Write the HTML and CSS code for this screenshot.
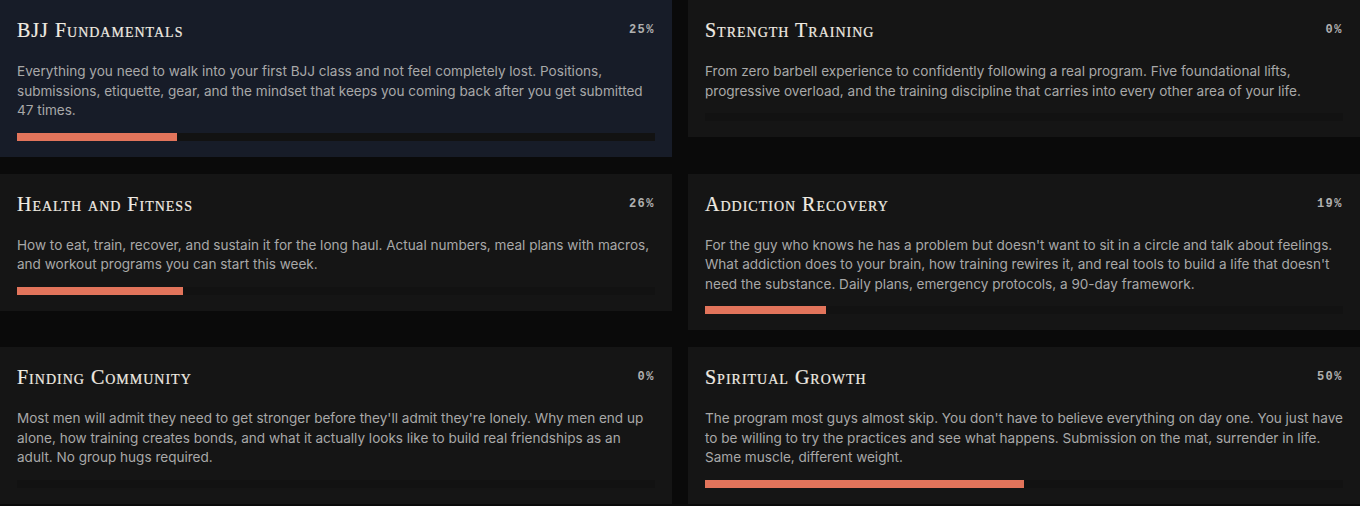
FILE: index.html
```html
<!DOCTYPE html>
<html lang="en">
<head>
<meta charset="utf-8">
<title>Programs</title>
<link rel="stylesheet" href="styles.css">
</head>
<body>
<main class="grid">
  <article class="card card-active">
    <div class="card-head"><h2 class="title">BJJ Fundamentals</h2><span class="pct">25%</span></div>
    <p class="desc">Everything you need to walk into your first BJJ class and not feel completely lost. Positions, submissions, etiquette, gear, and the mindset that keeps you coming back after you get submitted 47 times.</p>
    <div class="track"><div class="fill" style="width:25%"></div></div>
  </article>
  <article class="card">
    <div class="card-head"><h2 class="title">Strength Training</h2><span class="pct">0%</span></div>
    <p class="desc">From zero barbell experience to confidently following a real program. Five foundational lifts, progressive overload, and the training discipline that carries into every other area of your life.</p>
    <div class="track"><div class="fill" style="width:0%"></div></div>
  </article>
  <article class="card">
    <div class="card-head"><h2 class="title">Health and Fitness</h2><span class="pct">26%</span></div>
    <p class="desc">How to eat, train, recover, and sustain it for the long haul. Actual numbers, meal plans with macros, and workout programs you can start this week.</p>
    <div class="track"><div class="fill" style="width:26%"></div></div>
  </article>
  <article class="card">
    <div class="card-head"><h2 class="title">Addiction Recovery</h2><span class="pct">19%</span></div>
    <p class="desc">For the guy who knows he has a problem but doesn't want to sit in a circle and talk about feelings. What addiction does to your brain, how training rewires it, and real tools to build a life that doesn't need the substance. Daily plans, emergency protocols, a 90-day framework.</p>
    <div class="track"><div class="fill" style="width:19%"></div></div>
  </article>
  <article class="card">
    <div class="card-head"><h2 class="title">Finding Community</h2><span class="pct">0%</span></div>
    <p class="desc">Most men will admit they need to get stronger before they'll admit they're lonely. Why men end up alone, how training creates bonds, and what it actually looks like to build real friendships as an adult. No group hugs required.</p>
    <div class="track"><div class="fill" style="width:0%"></div></div>
  </article>
  <article class="card">
    <div class="card-head"><h2 class="title">Spiritual Growth</h2><span class="pct">50%</span></div>
    <p class="desc">The program most guys almost skip. You don't have to believe everything on day one. You just have to be willing to try the practices and see what happens. Submission on the mat, surrender in life. Same muscle, different weight.</p>
    <div class="track"><div class="fill" style="width:50%"></div></div>
  </article>
</main>
</body>
</html>
```
FILE: styles.css
```css
html, body {
  margin: 0;
  padding: 0;
  background: #0a0a0a;
}
body {
  font-family: Inter, "Liberation Sans", sans-serif;
  overflow: hidden;
}
.grid {
  display: grid;
  grid-template-columns: 672px 672px;
  column-gap: 16px;
  row-gap: 17px;
  align-items: start;
}
.card {
  background: #151515;
  padding: 16px 17px 16px;
  box-sizing: border-box;
}
.card-active {
  background: #171c28;
}
.card-head {
  display: flex;
  justify-content: space-between;
  align-items: center;
  height: 28px;
}
.title {
  margin: 0;
  font-family: "Liberation Serif", "DejaVu Serif", serif;
  font-variant: small-caps;
  font-weight: 400;
  font-size: 20px;
  letter-spacing: 1px;
  color: #f0ebe2;
  line-height: 28px;
  -webkit-text-stroke: 0.2px #f0ebe2;
}
.pct {
  font-family: "Liberation Mono", "DejaVu Sans Mono", monospace;
  font-weight: 700;
  font-size: 12px;
  letter-spacing: 1.5px;
  color: #b0b0b0;
  margin-right: 0;
}
.desc {
  margin: 18px 0 0;
  font-size: 13.55px;
  line-height: 19.5px;
  color: #a8a8a8;
}
.track {
  margin-top: 12px;
  height: 8px;
  background: #121212;
}
.fill {
  height: 100%;
  background: #e2745b;
}
```
